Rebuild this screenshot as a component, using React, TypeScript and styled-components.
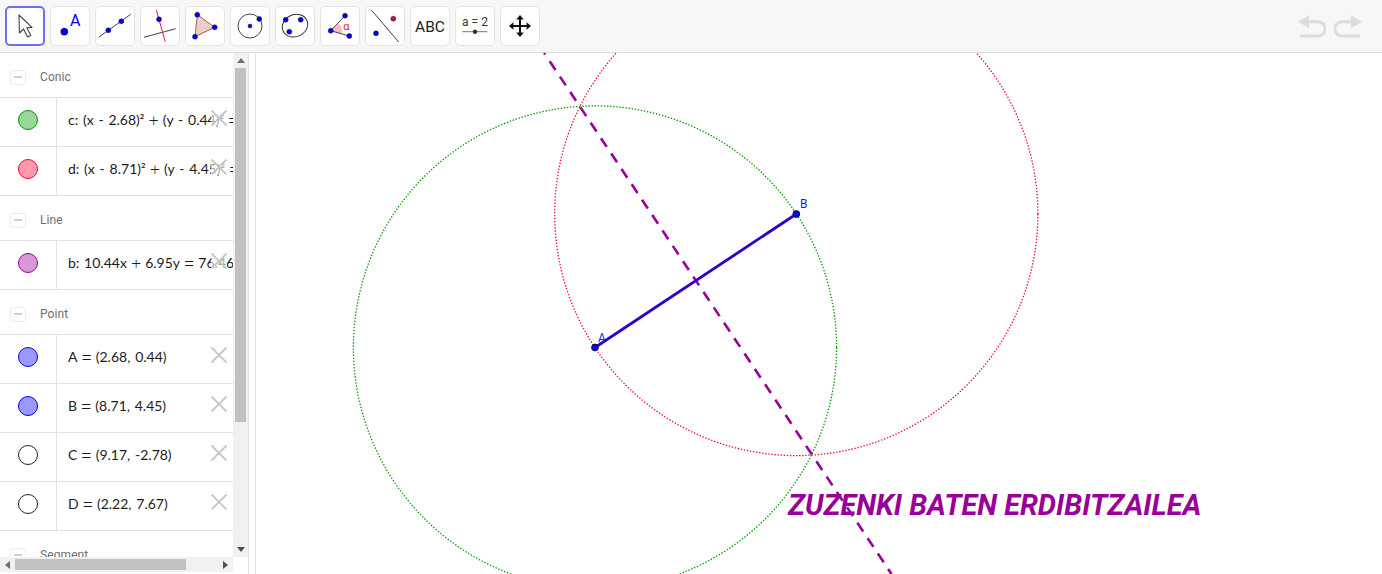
import React from "react";
import styled, { createGlobalStyle } from "styled-components";

const Global = createGlobalStyle`
  html, body { margin: 0; padding: 0; height: 100%; background: #fff; overflow: hidden; }
  #root { height: 100%; }
`;
const Page = styled.div`
  width: 1382px; height: 574px; display: flex; flex-direction: column;
  font-family: Roboto, "Liberation Sans", sans-serif; overflow: hidden;
`;
const Toolbar = styled.header`
  height: 52px; flex: none; display: flex; align-items: center; justify-content: space-between;
  padding: 0 20px 0 5px; background: #f7f7f7; border-bottom: 1px solid #dcdcdc;
`;
const Tools = styled.div` display: flex; gap: 5px; `;
const ToolButton = styled.button<{ $active?: boolean }>`
  width: 40px; height: 40px; padding: 0; box-sizing: border-box; background: #fff; cursor: pointer;
  border-radius: 5px; border: ${p => (p.$active ? "2px solid #6b6fff" : "1px solid #e4e4e4")};
  display: flex; align-items: center; justify-content: center;
  svg { display: block; flex: none; }
`;
const UndoRedo = styled.div` display: flex; gap: 8px; `;
const Main = styled.main` flex: 1; display: flex; min-height: 0; `;
const Side = styled.aside`
  width: 248px; flex: none; display: grid;
  grid-template-columns: 233px 15px; grid-template-rows: 504px 15px;
`;
const List = styled.div` overflow: hidden; background: #fff; `;
const SectionHeader = styled.div`
  height: 45px; box-sizing: border-box; display: flex; align-items: center; padding: 4px 0 0 10px;
  border-bottom: 1px solid #e2e2e2;
`;
const Collapse = styled.span`
  width: 16px; height: 15px; box-sizing: border-box; border: 1px solid #ececec; border-radius: 3px;
  display: flex; align-items: center; justify-content: center; margin-right: 14px;
  &::before { content: ""; width: 8px; height: 2px; background: #d0d0d0; }
`;
const SectionTitle = styled.span` font-size: 12px; color: #6e6e6e; letter-spacing: .1px; `;
const Row = styled.div`
  height: 49px; box-sizing: border-box; display: flex; position: relative; border-bottom: 1px solid #e2e2e2;
`;
const MarbleCell = styled.div`
  width: 57px; flex: none; box-sizing: border-box; border-right: 1px solid #e2e2e2;
  display: flex; align-items: center; justify-content: center; padding-bottom: 4px;
`;
const Marble = styled.span<{ $stroke: string; $fill: string }>`
  width: 20px; height: 20px; box-sizing: border-box; border-radius: 50%;
  border: 1px solid ${p => p.$stroke}; background: ${p => p.$fill};
`;
const Formula = styled.div`
  padding: 0 0 5px 11px; display: flex; align-items: center; white-space: nowrap; min-width: 0;
  font-family: Lato, "Open Sans", sans-serif; font-size: 14px; word-spacing: 1.2px; color: #1c1c1c;
  overflow: hidden; flex: 1;
`;
const Op = styled.span`
  margin: 0 4px; font-family: "Open Sans", sans-serif; font-weight: 300; font-size: 18px; line-height: 1;
`;
const Delete = styled.svg`
  position: absolute; left: 211px; top: 12px; width: 16px; height: 16px;
  background: rgba(255, 255, 255, .6);
`;
const VTrack = styled.div`
  background: #f1f1f1; display: flex; flex-direction: column; align-items: center; position: relative;
`;
const VThumb = styled.div` width: 11px; height: 354px; background: #c1c1c1; margin-top: 15px; `;
const HTrack = styled.div` background: #f1f1f1; display: flex; align-items: center; position: relative; `;
const HThumb = styled.div` width: 171px; height: 11px; background: #c1c1c1; margin-left: 15px; `;
const ScrollArrow = styled.span<{ $dir: "up" | "down" | "left" | "right" }>`
  position: absolute; width: 0; height: 0;
  ${p => p.$dir === "up" && "top: 5px; left: 4px; border: 4px solid transparent; border-top: 0; border-bottom: 5px solid #6e6e6e;"}
  ${p => p.$dir === "down" && "bottom: 5px; left: 4px; border: 4px solid transparent; border-bottom: 0; border-top: 5px solid #505050;"}
  ${p => p.$dir === "left" && "left: 5px; top: 4px; border: 4px solid transparent; border-left: 0; border-right: 5px solid #6e6e6e;"}
  ${p => p.$dir === "right" && "right: 5px; top: 4px; border: 4px solid transparent; border-right: 0; border-left: 5px solid #505050;"}
`;
const Corner = styled.div` background: #fff; `;
const Splitter = styled.div`
  width: 8px; flex: none; box-sizing: border-box; background: #fff;
  border-left: 1px solid #e4e4e4; border-right: 1px solid #e0e0e0;
`;
const Canvas = styled.svg` flex: 1; display: block; min-width: 0; height: 100%; background: #fff; `;
const CanvasTitle = styled.text`
  font-family: Roboto, sans-serif; font-weight: 700; font-style: italic; font-size: 28.9px; fill: #990099;
`;
const PointLabel = styled.text` font-family: Roboto, sans-serif; font-size: 12px; fill: #1a1aff; `;
const IconText = styled.text<{ $size: number; $color: string }>`
  font-family: Roboto, "Liberation Sans", sans-serif; font-size: ${p => p.$size}px; fill: ${p => p.$color};
`;

const BLUE = "#0000e6";
const Dot = ({ x, y, r = 2.5, fill = BLUE }: { x: number; y: number; r?: number; fill?: string }) => (
  <circle cx={x} cy={y} r={r} fill={fill} stroke="#1a1a4a" strokeWidth={0.5} />
);

const Icon = ({ children }: { children: React.ReactNode }) => (
  <svg width="38" height="38" viewBox="1 1 38 38">{children}</svg>
);

const tools: { active?: boolean; icon: React.ReactNode }[] = [
  { active: true, icon: <path d="M14 9 L14.4 27 L18.6 23 L22.6 31 L25.8 29.4 L21.8 21.8 L27 21.4 Z" fill="#fff" stroke="#444" strokeWidth="1.1" strokeLinejoin="round" /> },
  { icon: <><Dot x={14.3} y={25.7} r={3.6} /><IconText x={20} y={19.5} $size={16} $color="#0000ff">A</IconText></> },
  { icon: <><line x1="4" y1="31" x2="35.7" y2="8.3" stroke="#444" strokeWidth="1" /><Dot x={13.3} y={24.3} /><Dot x={26.3} y={15.3} /></> },
  { icon: <><line x1="4" y1="31.3" x2="35.7" y2="22.7" stroke="#444" strokeWidth="1" /><line x1="16.3" y1="4" x2="25.3" y2="35.7" stroke="#e6194b" strokeWidth="1" /><Dot x={19} y={13.3} /></> },
  { icon: <><polygon points="12.3,8.7 29.7,21.3 10,30.7" fill="#e8cfca" stroke="#a5604f" strokeWidth="1" /><Dot x={12.3} y={8.7} /><Dot x={29.7} y={21.3} /><Dot x={10} y={30.7} /></> },
  { icon: <><circle cx="20" cy="20" r="12" fill="none" stroke="#444" strokeWidth="1" /><Dot x={20} y={20} r={2} /><Dot x={29.3} y={13} /></> },
  { icon: <><ellipse cx="20" cy="19.7" rx="13" ry="11" transform="rotate(-25 20 19.7)" fill="none" stroke="#333" strokeWidth="1" /><Dot x={10.7} y={13.7} /><Dot x={25.7} y={13.7} /><Dot x={14.3} y={25.7} /></> },
  { icon: <><path d="M10.7 24.7 L18 17.2 A10 10 0 0 1 21.6 27.8 Z" fill="#f7bcc6" /><path d="M25 9.7 L10.7 24.7 L29.3 30" fill="none" stroke="#444" strokeWidth="1" /><Dot x={10.7} y={24.7} /><Dot x={25} y={9.7} /><Dot x={29.3} y={30} /><IconText x={23.2} y={23.6} $size={11} $color="#e6194b">α</IconText></> },
  { icon: <><line x1="6.3" y1="4" x2="33.7" y2="36" stroke="#444" strokeWidth="1" /><Dot x={28.3} y={12.7} fill="#e6002e" /><Dot x={11} y={27.3} /></> },
  { icon: <IconText x={20} y={25.5} $size={15.5} $color="#222" textAnchor="middle">ABC</IconText> },
  { icon: <><IconText x={20} y={19.5} $size={12} $color="#333" textAnchor="middle">a = 2</IconText><line x1="7.3" y1="25.7" x2="32.3" y2="25.7" stroke="#777" strokeWidth="1" /><circle cx="20" cy="25.7" r="2.2" fill="#333" /></> },
  { icon: <path d="M20 9 L23.8 13.4 L21 13.4 L21 19 L26.6 19 L26.6 16.2 L31 20 L26.6 23.8 L26.6 21 L21 21 L21 26.6 L23.8 26.6 L20 31 L16.2 26.6 L19 26.6 L19 21 L13.4 21 L13.4 23.8 L9 20 L13.4 16.2 L13.4 19 L19 19 L19 13.4 L16.2 13.4 Z" fill="#111" /> },
];

const T = ({ children }: { children: React.ReactNode }) => <span>{children}</span>;

type Item = { stroke: string; fill: string; text: React.ReactNode };
const sections: { title: string; items: Item[] }[] = [
  { title: "Conic", items: [
    { stroke: "#009900", fill: "#99d699", text: <><T>c: (x - 2.68)²</T><Op>+</Op><T>(y - 0.44)²</T><Op>=</Op></> },
    { stroke: "#ff0033", fill: "#ff99ad", text: <><T>d: (x - 8.71)²</T><Op>+</Op><T>(y - 4.45)²</T><Op>=</Op></> },
  ]},
  { title: "Line", items: [
    { stroke: "#990099", fill: "#d699d6", text: <><T>b: 10.44x</T><Op>+</Op><T>6.95y</T><Op>=</Op><T>76.46</T></> },
  ]},
  { title: "Point", items: [
    { stroke: "#0000ff", fill: "#9999ff", text: <><T>A</T><Op>=</Op><T>(2.68, 0.44)</T></> },
    { stroke: "#0000ff", fill: "#9999ff", text: <><T>B</T><Op>=</Op><T>(8.71, 4.45)</T></> },
    { stroke: "#222222", fill: "#ffffff", text: <><T>C</T><Op>=</Op><T>(9.17, -2.78)</T></> },
    { stroke: "#222222", fill: "#ffffff", text: <><T>D</T><Op>=</Op><T>(2.22, 7.67)</T></> },
  ]},
  { title: "Segment", items: [] },
];

// Canvas coordinates are page coordinates minus the canvas origin (256, 53).
const OX = 256, OY = 53;
const A = { x: 595 - OX, y: 347.5 - OY };
const B = { x: 796.3 - OX, y: 214 - OY };
const R = 241.6;

export default function App() {
  return (
    <Page>
      <Global />
      <Toolbar>
        <Tools>
          {tools.map((t, i) => (
            <ToolButton key={i} $active={t.active}><Icon>{t.icon}</Icon></ToolButton>
          ))}
        </Tools>
        <UndoRedo>
          <svg width="28" height="24" viewBox="0 0 28 24">
            <path d="M0 7.7 L11 1.5 L11 14.3 Z" fill="#dcdcdc" />
            <path d="M9 7.7 H20 A7.15 7.15 0 0 1 20 22 H2" fill="none" stroke="#dcdcdc" strokeWidth="3" />
          </svg>
          <svg width="28" height="24" viewBox="0 0 28 24">
            <path d="M28 7.7 L17 1.5 L17 14.3 Z" fill="#dcdcdc" />
            <path d="M19 7.7 H8 A7.15 7.15 0 0 0 8 22 H26" fill="none" stroke="#dcdcdc" strokeWidth="3" />
          </svg>
        </UndoRedo>
      </Toolbar>
      <Main>
        <Side>
          <List>
            {sections.map(s => (
              <div key={s.title}>
                <SectionHeader>
                  <Collapse />
                  <SectionTitle>{s.title}</SectionTitle>
                </SectionHeader>
                {s.items.map((it, i) => (
                  <Row key={i}>
                    <MarbleCell><Marble $stroke={it.stroke} $fill={it.fill} /></MarbleCell>
                    <Formula>{it.text}</Formula>
                    <Delete viewBox="0 0 16 16">
                      <path d="M0.5 0.5 L15.5 15.5 M15.5 0.5 L0.5 15.5" stroke="#c4c4c4" strokeWidth="1.8" fill="none" />
                    </Delete>
                  </Row>
                ))}
              </div>
            ))}
          </List>
          <VTrack>
            <ScrollArrow $dir="up" />
            <VThumb />
            <ScrollArrow $dir="down" />
          </VTrack>
          <HTrack>
            <ScrollArrow $dir="left" />
            <HThumb />
            <ScrollArrow $dir="right" />
          </HTrack>
          <Corner />
        </Side>
        <Splitter />
        <Canvas>
          <circle cx={A.x} cy={A.y} r={R} fill="none" stroke="#009900" strokeWidth="1.3" strokeDasharray="1.4 1.7" />
          <circle cx={B.x} cy={B.y} r={R} fill="none" stroke="#ff0033" strokeWidth="1.3" strokeDasharray="1.4 1.7" />
          <line x1={544.2 - OX} y1={53 - OY} x2={891.5 - OX} y2={574 - OY} stroke="#990099" strokeWidth="2.6" strokeDasharray="10.5 7.99" strokeDashoffset="8.6" />
          <line x1={A.x} y1={A.y} x2={B.x} y2={B.y} stroke="#2f00cc" strokeWidth="2.8" />
          <circle cx={A.x} cy={A.y} r="3.4" fill="#0000ff" stroke="#111" strokeWidth="1" />
          <circle cx={B.x} cy={B.y} r="3.4" fill="#0000ff" stroke="#111" strokeWidth="1" />
          <PointLabel x={598 - OX} y={342 - OY}>A</PointLabel>
          <PointLabel x={800 - OX} y={208 - OY}>B</PointLabel>
          <CanvasTitle x={788 - OX} y={515 - OY}>ZUZENKI BATEN ERDIBITZAILEA</CanvasTitle>
        </Canvas>
      </Main>
    </Page>
  );
}
